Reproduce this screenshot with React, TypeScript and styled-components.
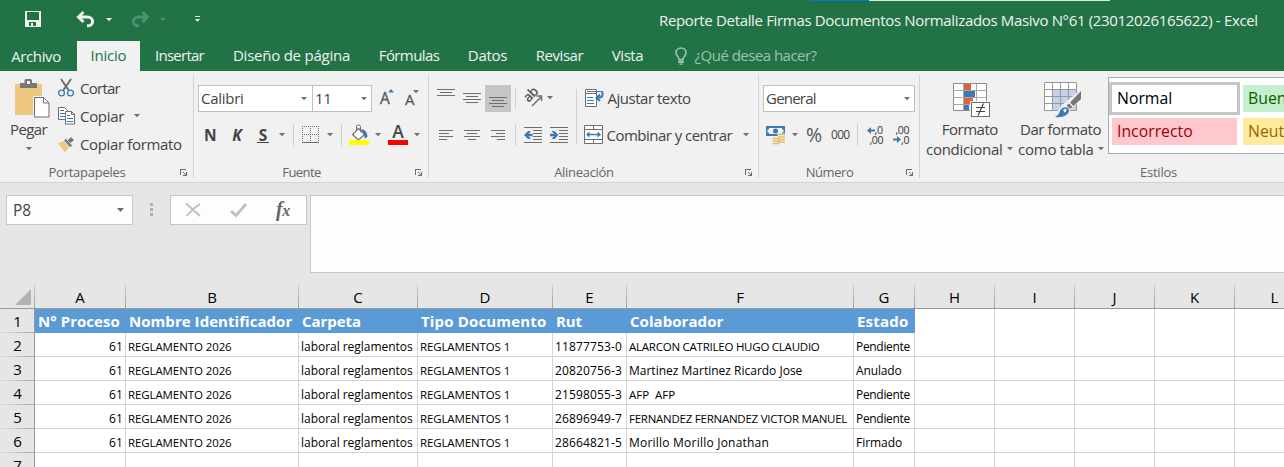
import React from "react";
import styled, { createGlobalStyle, css } from "styled-components";

const GlobalStyle = createGlobalStyle`
  * { box-sizing: border-box; }
  body {
    margin: 0;
    overflow: hidden;
    background: #e6e6e6;
    font-family: "Open Sans", "Noto Sans", sans-serif;
    font-size: 15px;
    color: #444;
  }
  svg { display: block; flex: none; }
`;

const GRAY = "#6e6e6e";
const BLUE = "#3e78b3";

/* ---------- shared parts ---------- */

const Window = styled.div`
  width: 1284px;
  height: 467px;
  overflow: hidden;
  display: flex;
  flex-direction: column;
`;

const Text = styled.span<{ $ls?: number; $ml?: number }>`
  white-space: pre;
  letter-spacing: ${(p) => p.$ls ?? 0}px;
  margin-left: ${(p) => p.$ml ?? 0}px;
`;

const Glyph = styled.svg<{ $ml?: number; $mt?: number }>`
  margin-left: ${(p) => p.$ml ?? 0}px;
  margin-top: ${(p) => p.$mt ?? 0}px;
  overflow: visible;
`;

const Crisp = styled(Glyph)`
  shape-rendering: crispEdges;
`;

const Caret = ({ ml, mt, color = GRAY }: { ml?: number; mt?: number; color?: string }) => (
  <Glyph $ml={ml} $mt={mt} width="6" height="3" viewBox="0 0 6 3">
    <path d="M0 0h6L3 3.2z" fill={color} />
  </Glyph>
);

/* ---------- title bar and tabs ---------- */

const Header = styled.header`
  height: 71px;
  flex: none;
  background: #217346;
  color: #f1f1f1;
`;

const BackWindowEdge = styled.div`
  display: flex;
  height: 1px;
  padding-left: 809px;
`;

const EdgePiece = styled.div<{ $w: number; $c: string }>`
  width: ${(p) => p.$w}px;
  background: ${(p) => p.$c};
`;

const TitleBar = styled.div`
  height: 40px;
  display: flex;
  align-items: flex-start;
`;

const Title = styled(Text)`
  line-height: 20px;
  margin-top: 9px;
`;

const TabRow = styled.nav`
  height: 30px;
  display: flex;
`;

const Tab = styled.div<{ $w: number; $active?: boolean; $file?: boolean }>`
  width: ${(p) => p.$w}px;
  height: 30px;
  line-height: 29px;
  text-align: center;
  ${(p) => p.$file && css`
    padding-top: 1px;
    margin-right: 5px;
  `}
  ${(p) => p.$active && css`
    background: #f1f1f1;
    color: #217346;
  `}
`;

const TellMe = styled.div`
  display: flex;
  margin-left: 18px;
  color: #9dc3ad;
  line-height: 29px;
`;

/* ---------- ribbon ---------- */

const Ribbon = styled.section`
  height: 112px;
  flex: none;
  display: flex;
  background: #f1f1f1;
  border-bottom: 1px solid #d2d2d2;
`;

const Group = styled.div<{ $w: number }>`
  width: ${(p) => p.$w}px;
  flex: none;
  display: flex;
  flex-direction: column;
`;

const Divider = styled.div`
  width: 1px;
  flex: none;
  margin: 4px 0;
  background: #d2d2d2;
`;

const GroupBody = styled.div<{ $row?: boolean }>`
  height: 92px;
  display: flex;
  flex-direction: ${(p) => (p.$row ? "row" : "column")};
`;

const GroupFooter = styled.div`
  display: flex;
  height: 18px;
  font-size: 13px;
  line-height: 18px;
  color: #666;
`;

const GroupLabel = styled.div<{ $ls?: number }>`
  flex: 1;
  text-align: center;
  letter-spacing: ${(p) => p.$ls ?? -0.3}px;
`;

const Launcher = () => (
  <Crisp $mt={6} $ml={6} width="13" height="8" viewBox="0 0 13 8">
    <path d="M0.5 6V0.5H6" fill="none" stroke={GRAY} />
    <path d="M3 3l3 3M6.500 3v3.500H3" fill="none" stroke={GRAY} />
    <path d="M4 6h2V4z" fill={GRAY} />
  </Crisp>
);

const Footer = ({ label, ls }: { label: string; ls?: number }) => (
  <GroupFooter>
    <GroupLabel $ls={ls}>{label}</GroupLabel>
    <Launcher />
  </GroupFooter>
);

const TopTools = styled.div`
  display: flex;
  height: 27px;
  line-height: 27px;
  margin-top: 14px;
`;

const BottomTools = styled.div`
  display: flex;
  height: 22px;
  line-height: 22px;
  margin-top: 12px;
`;

const ToolSep = styled.div<{ $ml: number; $mt?: number; $h?: number }>`
  width: 1px;
  flex: none;
  height: ${(p) => p.$h ?? 22}px;
  margin-left: ${(p) => p.$ml}px;
  margin-top: ${(p) => p.$mt ?? 0}px;
  background: #d0d0d0;
`;

const Combo = styled.div<{ $w: number; $ml: number; $pr?: number }>`
  display: flex;
  justify-content: space-between;
  flex: none;
  width: ${(p) => p.$w}px;
  height: 27px;
  margin-left: ${(p) => p.$ml}px;
  padding: 0 ${(p) => p.$pr ?? 4}px 0 2px;
  line-height: 25px;
  border: 1px solid #c0c0c0;
  background: #fff;
`;

const LargeButton = styled.div<{ $w: number; $ml?: number }>`
  width: ${(p) => p.$w}px;
  margin-left: ${(p) => p.$ml ?? 0}px;
  flex: none;
  display: flex;
  flex-direction: column;
`;

const LargeLine = styled.div<{ $pl: number; $mt?: number }>`
  display: flex;
  height: 20px;
  line-height: 20px;
  margin-top: ${(p) => p.$mt ?? 0}px;
  padding-left: ${(p) => p.$pl}px;
`;

const ClipList = styled.div`
  padding-top: 3px;
`;

const ClipItem = styled.div`
  display: flex;
  height: 28px;
  line-height: 28px;
`;

const IconCell = styled.div`
  width: 22px;
`;

const FontStyle = styled.span<{ $ml: number; $italic?: boolean; $line?: boolean }>`
  margin-left: ${(p) => p.$ml}px;
  width: 12px;
  text-align: center;
  font-weight: 700;
  font-size: 15.5px;
  line-height: 22px;
  height: ${(p) => (p.$line ? 19 : 22)}px;
  font-style: ${(p) => (p.$italic ? "italic" : "normal")};
  ${(p) => p.$line && css`border-bottom: 1px solid #444;`}
`;

const Percent = styled.span`
  margin-left: 8px;
  width: 17px;
  font-size: 19.5px;
  letter-spacing: -1px;
  line-height: 21px;
  color: #555;
`;

const Thousands = styled.span`
  margin-left: 8px;
  width: 19px;
  font-size: 12px;
  letter-spacing: -0.7px;
  line-height: 22px;
`;

const AlignToggle = styled.div`
  width: 26px;
  height: 27px;
  margin-left: 4px;
  background: #c5c5c5;
`;

const AlignLeft = styled.div`
  width: 147px;
`;

const Lines = ({ widths, w, anchor, ml, mt }: { widths: number[]; w: number; anchor: "l" | "c" | "r"; ml: number; mt: number }) => (
  <Crisp $ml={ml} $mt={mt} width={w} height={widths.length * 3} viewBox={`0 0 ${w} ${widths.length * 3}`}>
    {widths.map((lw, i) => (
      <rect
        key={i}
        x={anchor === "l" ? 0 : anchor === "r" ? w - lw : (w - lw) / 2}
        y={i * 3}
        width={lw}
        height="1"
        fill={GRAY}
      />
    ))}
  </Crisp>
);

const Indent = ({ right, ml }: { right?: boolean; ml: number }) => (
  <Crisp $ml={ml} $mt={3} width="18" height="16" viewBox="0 0 18 16">
    <path d="M0 .5h18M9 3.500h9M9 6.500h9M9 9.500h9M9 12.500h9M0 15.500h18" stroke={GRAY} />
    <path
      d={right ? "M0 6.800h4L1.500 4h3L8.500 8l-4 4h-3L4 9.200H0z" : "M8.500 6.800h-4L7 4H4L0 8l4 4h3L4.500 9.200h4z"}
      fill={BLUE}
      shapeRendering="auto"
    />
  </Crisp>
);

const Gallery = styled.div`
  width: 200px;
  flex: none;
  height: 77px;
  margin: 6px 0 0 5px;
  padding: 4px 0 0 0;
  border: 1px solid #ababab;
  background: #fff;
`;

const GalleryRow = styled.div`
  display: flex;
  height: 33px;
`;

const StyleCell = styled.div<{ $bg: string; $c: string; $selected?: boolean }>`
  flex: none;
  width: 125px;
  height: 27px;
  margin: 3px;
  padding-left: 5px;
  font-size: 15.800px;
  line-height: 26px;
  background: ${(p) => p.$bg};
  color: ${(p) => p.$c};
  ${(p) => p.$selected && css`box-shadow: 0 0 0 3px #c6c6c6;`}
`;

/* ---------- formula bar ---------- */

const FormulaBar = styled.section`
  height: 102px;
  flex: none;
  display: flex;
  padding: 12px 0 0 6px;
`;

const Field = styled.div<{ $w: number; $ml?: number }>`
  width: ${(p) => p.$w}px;
  height: 30px;
  flex: none;
  display: flex;
  margin-left: ${(p) => p.$ml ?? 0}px;
  border: 1px solid #c6c6c6;
  background: #fdfdfd;
`;

const NameText = styled.span`
  width: 104px;
  margin-left: 6px;
  font-size: 15.5px;
  line-height: 29px;
`;

const FxText = styled.span`
  margin-left: 29px;
  font: italic 700 20px/26px "Liberation Serif", serif;
  letter-spacing: -0.5px;
  color: #666;
  small { font-size: 16px; }
`;

const FormulaInput = styled.div`
  flex: 1;
  height: 78px;
  margin-left: 3px;
  border: 1px solid #c6c6c6;
  border-right: 0;
  background: #fdfdfd;
`;

/* ---------- sheet ---------- */

const COLS = "35px 91px 173px 119px 135px 74px 227px 61px repeat(5, 80px)";

const SheetRow = styled.div`
  display: grid;
  grid-template-columns: ${COLS};
  height: 24px;
  flex: none;
`;

const ColumnHeads = styled(SheetRow)`
  border-bottom: 1px solid #999;
`;

const ColumnHead = styled.div`
  text-align: center;
  line-height: 25px;
  color: #000;
  border-right: 1px solid;
  border-image: linear-gradient(#d0d0d0, #999) 1;
`;

const Corner = styled.div`
  border-right: 1px solid;
  border-image: linear-gradient(#d0d0d0, #999) 1;
`;

const RowHead = styled.div`
  height: 24px;
  padding-left: 1px;
  text-align: center;
  line-height: 24px;
  color: #000;
  border-right: 1px solid #999;
  background: linear-gradient(to right, #dcdcdc, #a6a6a6) 0 100% / 100% 1px no-repeat #e6e6e6;
`;

const HeadCell = styled.div<{ $ls?: number }>`
  padding-left: 3px;
  white-space: nowrap;
  font-weight: 700;
  line-height: 25px;
  letter-spacing: ${(p) => p.$ls ?? 0.1}px;
  color: #fff;
  background: #5b9bd5;
`;

const Cell = styled.div<{ $ls?: number; $right?: boolean; $caps?: boolean }>`
  padding: 0 2px;
  white-space: pre;
  overflow: hidden;
  font-size: ${(p) => (p.$caps ? 11.5 : 12)}px;
  line-height: 27px;
  text-align: ${(p) => (p.$right ? "right" : "left")};
  letter-spacing: ${(p) => p.$ls ?? 0}px;
  color: #000;
  background: #fff;
  border-right: 1px solid #d4d4d4;
  border-bottom: 1px solid #d4d4d4;
`;

const HEADS: [string, number][] = [
  ["N° Proceso", 0.05],
  ["Nombre Identificador", 0.05],
  ["Carpeta", -0.05],
  ["Tipo Documento", 0.16],
  ["Rut", -0.1],
  ["Colaborador", 0.06],
  ["Estado", 0.22],
];

const PEOPLE: { rut: string; name: string; caps?: boolean; nls: number; state: string; sls: number }[] = [
  { rut: "11877753-0", name: "ALARCON CATRILEO HUGO CLAUDIO", caps: true, nls: -0.24, state: "Pendiente", sls: -0.32 },
  { rut: "20820756-3", name: "Martinez Martinez Ricardo Jose", nls: 0, state: "Anulado", sls: -0.14 },
  { rut: "21598055-3", name: "AFP  AFP", caps: true, nls: 0, state: "Pendiente", sls: -0.32 },
  { rut: "26896949-7", name: "FERNANDEZ FERNANDEZ VICTOR MANUEL", caps: true, nls: -0.25, state: "Pendiente", sls: -0.32 },
  { rut: "28664821-5", name: "Morillo Morillo Jonathan", nls: 0.22, state: "Firmado", sls: -0.04 },
];

const blanks = (n: number) => Array.from({ length: n }, (_, i) => <Cell key={i} />);

export default function App() {
  return (
    <Window>
      <GlobalStyle />
      <Header>
        <BackWindowEdge>
          <EdgePiece $w={60} $c="#0078d7" />
          <EdgePiece $w={241} $c="#dfe6e1" />
        </BackWindowEdge>
        <TitleBar>
          <Crisp $ml={25} $mt={10} width="16" height="16" viewBox="0 0 16 16">
            <path d="M0 0h16v16H0zM2 1v8h12V1zM4 11v4h2v-3h2v3h3v-4z" fill="#f1f1f1" fillRule="evenodd" />
          </Crisp>
          <Glyph $ml={36} $mt={11} width="18" height="15" viewBox="0 0 18 15">
            <path d="M6.5 0L1.5 5l5 5M2 5h8.500a5 4.300 0 0 1 0 8.800H10" fill="none" stroke="#f1f1f1" strokeWidth="3" />
          </Glyph>
          <Caret ml={11} mt={17} color="#f1f1f1" />
          <Glyph $ml={19} $mt={11} width="18" height="15" viewBox="0 0 18 15">
            <path d="M11.500 0l5 5-5 5M16 5H7.500a5 4.300 0 0 0 0 8.800H8" fill="none" stroke="#4f9070" strokeWidth="3" />
          </Glyph>
          <Caret ml={11} mt={17} color="#4f9070" />
          <Glyph $ml={29} $mt={15} width="5" height="6" viewBox="0 0 5 6">
            <path d="M0 0h5v1H0zM0 3h5L2.500 6z" fill="#f1f1f1" />
          </Glyph>
          <Title $ls={-0.335} $ml={459}>
            Reporte Detalle Firmas Documentos Normalizados Masivo N°61 (23012026165622) - Excel
          </Title>
        </TitleBar>
        <TabRow>
          <Tab $w={72} $file><Text $ls={-0.38}>Archivo</Text></Tab>
          <Tab $w={63} $active><Text $ls={-0.23}>Inicio</Text></Tab>
          <Tab $w={79}><Text $ls={-0.75}>Insertar</Text></Tab>
          <Tab $w={145}><Text $ls={-0.23}>Diseño de página</Text></Tab>
          <Tab $w={90}><Text $ls={-0.6}>Fórmulas</Text></Tab>
          <Tab $w={67}><Text $ls={-0.27}>Datos</Text></Tab>
          <Tab $w={77}><Text $ls={-0.46}>Revisar</Text></Tab>
          <Tab $w={59}><Text $ls={-0.43}>Vista</Text></Tab>
          <TellMe>
            <Glyph $mt={6} width="12" height="18" viewBox="0 0 12 18">
              <path d="M4 12.500C4 10 1 9 1 5.700a5 4.700 0 0 1 10 0C11 9 8 10 8 12.500z" fill="none" stroke="#9dc3ad" strokeWidth="1.600" />
              <path d="M3.200 13.500h5.600v2.500H3.200zM4.500 16.500h3v1.200h-3z" fill="#9dc3ad" />
            </Glyph>
            <Text $ls={-0.52} $ml={7.6}>¿Qué desea hacer?</Text>
          </TellMe>
        </TabRow>
      </Header>

      <Ribbon>
        <Group $w={193}>
          <GroupBody $row>
            <LargeButton $w={58}>
              <Glyph $ml={15} $mt={8} width="35" height="39" viewBox="0 0 35 39">
                <rect x="0" y="5" width="27" height="31" fill="#edc87e" />
                <path d="M5 4h4.500V1.500Q9.500 0 11 0h4.500q1.500 0 1.500 1.500V4H22v5H5z" fill="#767676" />
                <rect x="12" y="2" width="3" height="3" fill="#f1f1f1" />
                <path d="M18 17h13l5 5v18H18z" fill="#f1f1f1" />
                <path d="M19.500 18.500h9l5.500 5.500v14H19.500z" fill="#fff" stroke={GRAY} />
                <path d="M28.500 18.500V24H34" fill="none" stroke={GRAY} />
              </Glyph>
              <LargeLine $pl={10} $mt={1}><Text $ls={-0.6}>Pegar</Text></LargeLine>
              <Caret ml={26} mt={8} />
            </LargeButton>
            <ClipList>
              <ClipItem>
                <IconCell>
                  <Glyph $mt={5} width="17" height="18" viewBox="0 0 17 18">
                    <path d="M3 0l7.500 11M13 0L5.500 11" stroke={GRAY} strokeWidth="2" fill="none" />
                    <circle cx="3.500" cy="14" r="2.900" fill="none" stroke={BLUE} strokeWidth="1.300" />
                    <circle cx="12.500" cy="14" r="2.900" fill="none" stroke={BLUE} strokeWidth="1.300" />
                  </Glyph>
                </IconCell>
                <Text $ls={-0.74}>Cortar</Text>
              </ClipItem>
              <ClipItem>
                <IconCell>
                  <Glyph $mt={5} width="17" height="18" viewBox="0 0 17 18">
                    <path d="M.5.5h6l3 3v9h-9z" fill="#fff" stroke={GRAY} />
                    <path d="M2 3.500h4M2 6.500h5M2 9.500h5" stroke={BLUE} />
                    <path d="M7.500 4.500h6l3 3v9.500h-9z" fill="#fff" stroke={GRAY} />
                    <path d="M13.500 4.500v3h3" fill="none" stroke={GRAY} />
                    <path d="M9 8.500h3M9 11.500h6M9 14.500h6" stroke={BLUE} />
                  </Glyph>
                </IconCell>
                <Text $ls={-0.3}>Copiar</Text>
                <Caret ml={10} mt={12} />
              </ClipItem>
              <ClipItem>
                <IconCell>
                  <Glyph $mt={7} width="18" height="16" viewBox="0 0 18 16">
                    <path d="M0 6.500L5.500 4l6 6L7 15.500z" fill="#edc87e" />
                    <path d="M6 3.500l2.200-2L10 3l3-3 3 3-3.500 3 2 2-2.200 2.200z" fill="#767676" />
                    <path d="M8 2l6 6" stroke="#f1f1f1" strokeWidth=".7" />
                  </Glyph>
                </IconCell>
                <Text $ls={-0.35}>Copiar formato</Text>
              </ClipItem>
            </ClipList>
          </GroupBody>
          <Footer label="Portapapeles" ls={-0.25} />
        </Group>
        <Divider />

        <Group $w={234}>
          <GroupBody>
            <TopTools>
              <Combo $w={115} $ml={4} $pr={5}>
                <Text $ls={-0.28}>Calibri</Text>
                <Caret mt={11} />
              </Combo>
              <Combo $w={60} $ml={-1}>
                <Text $ls={-0.4}>11</Text>
                <Caret mt={11} />
              </Combo>
              <Glyph $ml={8} $mt={3} width="16" height="18" viewBox="0 0 16 18">
                <text x="0" y="16" fontSize="15.500" fill="#555" stroke="#555" strokeWidth=".3">A</text>
                <path d="M8 4.500h6L11 1z" fill={BLUE} />
              </Glyph>
              <Glyph $ml={9} $mt={3} width="16" height="18" viewBox="0 0 16 18">
                <text x="0" y="16.500" fontSize="15" fill="#555" stroke="#555" strokeWidth=".3">A</text>
                <path d="M8 2h6l-3 3.300z" fill={BLUE} />
              </Glyph>
            </TopTools>
            <BottomTools>
              <FontStyle $ml={10}>N</FontStyle>
              <FontStyle $ml={15} $italic>K</FontStyle>
              <FontStyle $ml={14} $line>S</FontStyle>
              <Caret ml={10} mt={9} />
              <ToolSep $ml={8} />
              <Crisp $ml={8} $mt={2} width="17" height="17" viewBox="0 0 17 17">
                <path d="M0 .5h17M0 8.500h17M.5 0v16M8.500 0v16M16.500 0v16" stroke={GRAY} strokeDasharray="1 1" fill="none" />
                <path d="M0 16.500h17" stroke={GRAY} />
              </Crisp>
              <Caret ml={8} mt={9} />
              <ToolSep $ml={8} />
              <Glyph $ml={7} $mt={0} width="20" height="21" viewBox="0 0 20 21">
                <path d="M12 5q6 .5 6.500 8l-3 1.500q0-5-2.500-7z" fill={BLUE} />
                <path d="M9.500 4.500l6 6-6 5.500-6-5.500z" fill="#fff" stroke={GRAY} strokeWidth="1.200" />
                <path d="M7.500 6V2.500Q7.500 1 9.500 1t2 1.500V8" fill="none" stroke={GRAY} />
                <rect x="0" y="16" width="20" height="5" fill="#ff0" />
              </Glyph>
              <Caret ml={6} mt={9} />
              <Glyph $ml={7} $mt={0} width="20" height="21" viewBox="0 0 20 21">
                <text x="10" y="14" fontSize="17.500" fontWeight="600" fill="#444" textAnchor="middle">A</text>
                <rect x="0" y="16" width="20" height="5" fill="#f00" />
              </Glyph>
              <Caret ml={6} mt={9} />
            </BottomTools>
          </GroupBody>
          <Footer label="Fuente" ls={-0.58} />
        </Group>
        <Divider />

        <Group $w={329}>
          <GroupBody $row>
            <AlignLeft>
              <TopTools>
                <Lines ml={8} mt={4} w={18} anchor="c" widths={[18, 12, 18]} />
                <Lines ml={8} mt={8} w={18} anchor="c" widths={[18, 12, 18, 12]} />
                <AlignToggle>
                  <Lines ml={4} mt={12} w={18} anchor="c" widths={[18, 12, 18, 12]} />
                </AlignToggle>
                <ToolSep $ml={4} $mt={2} />
                <Glyph $ml={7} $mt={4} width="20" height="18" viewBox="0 0 20 18">
                  <text x="0" y="0" fontSize="13.500" fontWeight="600" fill="#555" letterSpacing="-.6" transform="translate(5.500 14) rotate(-45)">ab</text>
                  <path d="M9 17L18 8M13.500 7H18.500V12" fill="none" stroke={GRAY} strokeWidth="1.500" />
                </Glyph>
                <Caret ml={4} mt={11} />
              </TopTools>
              <BottomTools>
                <Lines ml={10} mt={6} w={14} anchor="l" widths={[14, 10, 14, 8]} />
                <Lines ml={11} mt={6} w={16} anchor="c" widths={[16, 10, 16, 8]} />
                <Lines ml={11} mt={6} w={14} anchor="r" widths={[14, 9, 14, 8]} />
                <ToolSep $ml={10} />
                <Indent ml={8} />
                <Indent ml={8} right />
              </BottomTools>
            </AlignLeft>
            <ToolSep $ml={0} $mt={18} $h={55} />
            <div>
              <TopTools>
                <Glyph $ml={8} $mt={4} width="20" height="18" viewBox="0 0 20 18">
                  <path d="M.5.5h11v4H.5zM.5 4.500h11v13H.5z" fill="#fff" stroke={GRAY} />
                  <path d="M2 2.500h15M2 8.500h6M2 11.500h7M2 14.500h7" stroke={BLUE} fill="none" />
                  <path d="M17 2.500q2.500 6-4 6.500M15 5.500L11.500 9l3.500 3" fill="none" stroke={BLUE} strokeWidth="2" />
                </Glyph>
                <Text $ls={-0.48} $ml={2.5}>Ajustar texto</Text>
              </TopTools>
              <BottomTools>
                <Glyph $ml={7} $mt={1} width="19" height="19" viewBox="0 0 19 19">
                  <path d="M.5.5h18v18H.5zM.5 4.500h18M.5 14.500h18M9.500.5v4M9.500 14.500v4" fill="#fff" stroke={GRAY} />
                  <path d="M3 9.500h13" stroke={BLUE} strokeWidth="1.500" />
                  <path d="M2 9.500L5.500 6.500v6zM17 9.500L13.500 6.500v6z" fill={BLUE} />
                </Glyph>
                <Text $ls={-0.53} $ml={3.6}>Combinar y centrar</Text>
                <Caret ml={11} mt={9} />
              </BottomTools>
            </div>
          </GroupBody>
          <Footer label="Alineación" />
        </Group>
        <Divider />

        <Group $w={160}>
          <GroupBody>
            <TopTools>
              <Combo $w={152} $ml={4}>
                <Text $ls={-0.78}>General</Text>
                <Caret mt={11} />
              </Combo>
            </TopTools>
            <BottomTools>
              <Glyph $ml={7} $mt={2} width="20" height="19" viewBox="0 0 20 19">
                <path d="M0 0h19v10H0z" fill={BLUE} />
                <path d="M3 2h13v1.500h1.500v3H16V8H3V6.500H1.500v-3H3z" fill="#f1f1f1" />
                <circle cx="9.500" cy="5" r="2.500" fill={BLUE} />
                <path d="M11.500 7.500h7.500V17H14v2H6v-8h5.500z" fill="#f1f1f1" />
                <path d="M12 8.500h7M12 11h7M12 13.500h7M12 16h7M6.500 12.500h7M6.500 15h7M6.500 17.500h7" stroke="#e8b96a" strokeWidth="1.600" />
              </Glyph>
              <Caret ml={6} mt={9} />
              <Percent>%</Percent>
              <Thousands>000</Thousands>
              <ToolSep $ml={7} />
              <Glyph $ml={9} $mt={2} width="17" height="19" viewBox="0 0 17 19">
                <path d="M0 4.500L4 1v2.500h4v2H4V8z" fill={BLUE} />
                <text x="7.500" y="8" fontSize="10.500" fill="#333" letterSpacing="-.3">,0</text>
                <text x="2.500" y="18" fontSize="10.500" fill="#333" letterSpacing="-.4">,00</text>
              </Glyph>
              <Glyph $ml={9} $mt={2} width="17" height="19" viewBox="0 0 17 19">
                <path d="M8 13.500L4 10v2.500H0v2h4V17z" fill={BLUE} />
                <text x="2.500" y="8" fontSize="10.500" fill="#333" letterSpacing="-.4">,00</text>
                <text x="8" y="18" fontSize="10.500" fill="#333" letterSpacing="-.3">,0</text>
              </Glyph>
            </BottomTools>
          </GroupBody>
          <Footer label="Número" ls={-0.45} />
        </Group>
        <Divider />

        <Group $w={477}>
          <GroupBody $row>
            <LargeButton $w={94}>
              <Glyph $ml={33} $mt={12} width="38" height="35" viewBox="0 0 38 35">
                <path d="M.5.5h33v27H.5z" fill="#fff" stroke="#8a8a8a" />
                <path d="M.5 7.500h33M.5 14.500h33M.5 21.500h33M10.500.5v27M23.500.5v27" stroke="#a8a8a8" />
                <path d="M11 1h7v6h-7zM11 15h9v6h-9z" fill="#d9623f" />
                <path d="M11 8h11v6H11zM11 22h5v5h-5z" fill={BLUE} />
                <rect x="17" y="18" width="21" height="17" fill="#f1f1f1" />
                <rect x="18.500" y="19.500" width="18" height="14" fill="#fff" stroke={GRAY} />
                <path d="M23 24.500h9M23 28.500h9M30.500 20.500l-5.500 12" stroke="#444" strokeWidth="1.200" />
              </Glyph>
              <LargeLine $pl={21.7} $mt={1}><Text $ls={-0.47}>Formato</Text></LargeLine>
              <LargeLine $pl={6}>
                <Text $ls={-0.29}>condicional</Text>
                <Caret ml={4} mt={8} />
              </LargeLine>
            </LargeButton>
            <LargeButton $w={89}>
              <Glyph $ml={30} $mt={11} width="38" height="36" viewBox="0 0 38 36">
                <path d="M.5.5h32v28H.5z" fill="#fff" />
                <path d="M9 8h23.500v20H9z" fill="#c3d3ea" />
                <path d="M.5.5h32v28H.5zM.5 7.500h32M.5 14.500h32M.5 21.500h32M8.500.5v28M16.500.5v28M24.500.5v28" fill="none" stroke="#989898" />
                <path d="M38 7v10L24 30l-6 6H8l10-13z" fill="#f1f1f1" />
                <path d="M37 9v8l-7.500 7-3.500-3.500z" fill="#767676" />
                <path d="M25 21.500l3.500 3.500-2.500 2-3.500-3.500z" fill="#767676" />
                <path d="M11 35q4-2 5-6.500 3-4.500 7.500-3 3 3 0 6.500-5 4-12.500 3z" fill={BLUE} />
                <path d="M19 28q2-2 3.500-1 .5 2.500-2 3.500z" fill="#f1f1f1" />
              </Glyph>
              <LargeLine $pl={6} $mt={1}><Text $ls={-0.45}>Dar formato</Text></LargeLine>
              <LargeLine $pl={4}>
                <Text $ls={-0.24}>como tabla</Text>
                <Caret ml={4} mt={8} />
              </LargeLine>
            </LargeButton>
            <Gallery>
              <GalleryRow>
                <StyleCell $bg="#fff" $c="#000" $selected>Normal</StyleCell>
                <StyleCell $bg="#c6efce" $c="#006100">Bueno</StyleCell>
              </GalleryRow>
              <GalleryRow>
                <StyleCell $bg="#ffc7ce" $c="#9c0006">Incorrecto</StyleCell>
                <StyleCell $bg="#ffeb9c" $c="#9c6500">Neutral</StyleCell>
              </GalleryRow>
            </Gallery>
          </GroupBody>
          <GroupFooter>
            <GroupLabel $ls={-0.24}>Estilos</GroupLabel>
          </GroupFooter>
        </Group>
      </Ribbon>

      <FormulaBar>
        <Field $w={127}>
          <NameText>P8</NameText>
          <Glyph $mt={12} width="7" height="4" viewBox="0 0 7 4">
            <path d="M0 0h7L3.500 4z" fill={GRAY} />
          </Glyph>
        </Field>
        <Crisp $ml={17} $mt={8} width="3" height="13" viewBox="0 0 3 13">
          <path d="M0 0h3v3H0zM0 5h3v3H0zM0 10h3v3H0z" fill="#b0b0b0" />
        </Crisp>
        <Field $w={137} $ml={17}>
          <Glyph $ml={14} $mt={7} width="16" height="14" viewBox="0 0 16 14">
            <path d="M1 .5q6 5 14 12.500M15 1Q7 6 1.500 13" fill="none" stroke="#c0c0c0" strokeWidth="2" />
          </Glyph>
          <Glyph $ml={29} $mt={7} width="17" height="14" viewBox="0 0 17 14">
            <path d="M1 8l5 4.500L16 1" fill="none" stroke="#c0c0c0" strokeWidth="2.800" />
          </Glyph>
          <FxText>f<small>x</small></FxText>
        </Field>
        <FormulaInput />
      </FormulaBar>

      <ColumnHeads>
        <Corner>
          <Glyph $ml={15} $mt={4} width="16" height="16" viewBox="0 0 16 16">
            <path d="M16 0v16H0z" fill="#b2b2b2" />
          </Glyph>
        </Corner>
        {"ABCDEFGHIJKL".split("").map((c) => (
          <ColumnHead key={c}>{c}</ColumnHead>
        ))}
      </ColumnHeads>
      <SheetRow>
        <RowHead>1</RowHead>
        {HEADS.map(([t, ls]) => (
          <HeadCell key={t} $ls={ls}>{t}</HeadCell>
        ))}
        {blanks(5)}
      </SheetRow>
      {PEOPLE.map((p, i) => (
        <SheetRow key={p.rut}>
          <RowHead>{i + 2}</RowHead>
          <Cell $right $ls={0.1}>61</Cell>
          <Cell $caps $ls={-0.1}>REGLAMENTO 2026</Cell>
          <Cell $ls={-0.03}>laboral reglamentos</Cell>
          <Cell $caps $ls={-0.12}>REGLAMENTOS 1</Cell>
          <Cell $ls={0.14}>{p.rut}</Cell>
          <Cell $caps={p.caps} $ls={p.nls}>{p.name}</Cell>
          <Cell $ls={p.sls}>{p.state}</Cell>
          {blanks(5)}
        </SheetRow>
      ))}
      <SheetRow>
        <RowHead>7</RowHead>
        {blanks(12)}
      </SheetRow>
    </Window>
  );
}
